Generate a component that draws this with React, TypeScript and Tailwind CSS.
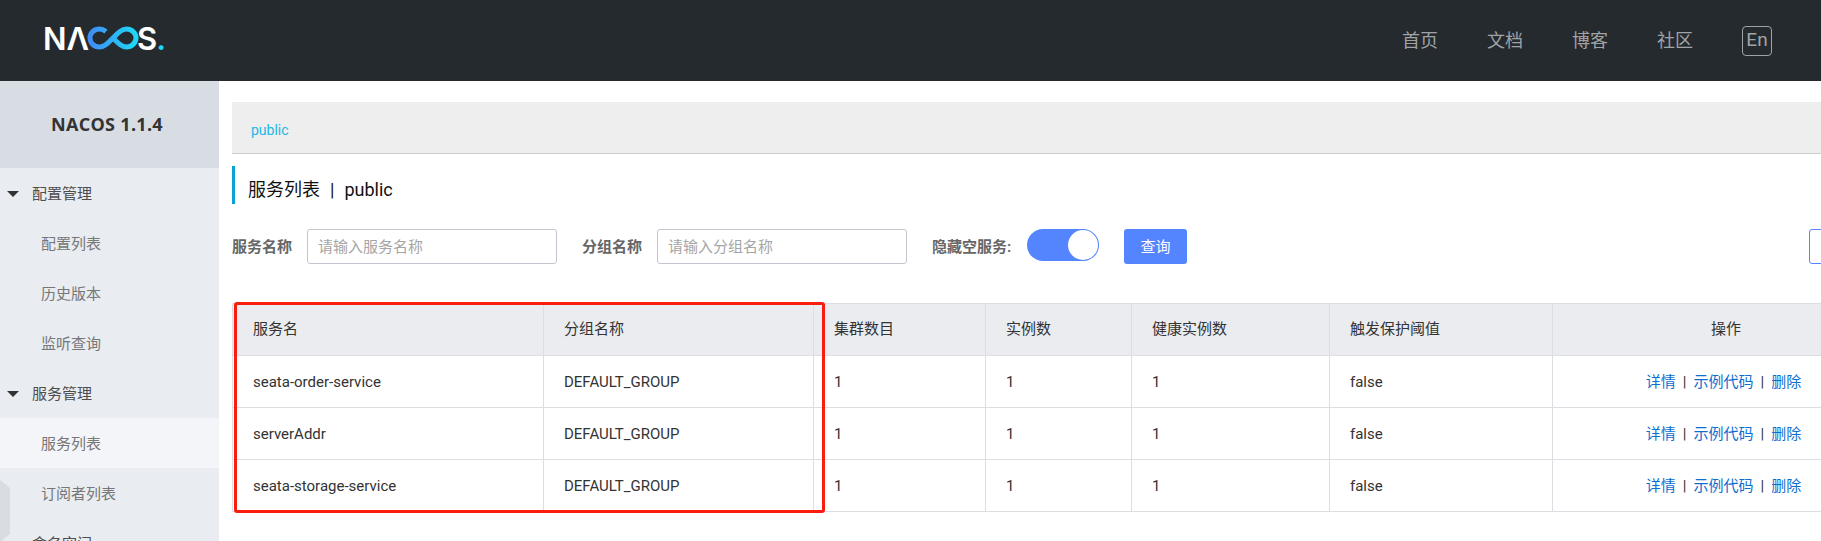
const cjk = "font-['Roboto','Noto_Sans_CJK_SC',sans-serif]";

const navLinks = ["首页", "文档", "博客", "社区"];

const columns = [
  { title: "服务名", width: "w-[311px]" },
  { title: "分组名称", width: "w-[270px]" },
  { title: "集群数目", width: "w-[172px]" },
  { title: "实例数", width: "w-[146px]" },
  { title: "健康实例数", width: "w-[198px]" },
  { title: "触发保护阈值", width: "w-[223px]" },
];

const services = ["seata-order-service", "serverAddr", "seata-storage-service"];

function Logo() {
  return (
    <div className="-mt-[5px] flex items-center text-[31px] leading-none font-semibold text-white font-['Inter',sans-serif]">
      <span>NΛ</span>
      <svg width="52" height="24" viewBox="0 0 52 24" fill="none" className="-ml-[2px]">
        <defs>
          <linearGradient id="inf" x1="0" x2="1" y1="0" y2="0">
            <stop offset="0" stopColor="#3f8df5" />
            <stop offset="1" stopColor="#1ed8f5" />
          </linearGradient>
        </defs>
        <path
          d="M19 5.500C16.800 3.800 15 3 12.500 3 7 3 3 7 3 12s4 9 9.500 9c4.500 0 7.500-3 13.500-9s9-9 13.500-9C44.500 3 49 7 49 12s-4.500 9-9.500 9c-4.500 0-7.500-3-13.500-9"
          stroke="url(#inf)"
          strokeWidth="5"
        />
      </svg>
      <span className="-ml-[2px]">S</span>
      <span className="-ml-px text-[#1ed8f5]">.</span>
    </div>
  );
}

function Header() {
  return (
    <header className="flex h-[81px] items-center justify-between bg-[#252a2f] pr-[49px] pl-[43px]">
      <Logo />
      <nav className="flex items-center text-[18px] text-[#a0a3a6]">
        {navLinks.map((link) => (
          <a key={link} className="mr-[49px]">
            {link}
          </a>
        ))}
        <span className="flex h-[30px] w-[30px] items-center justify-center rounded-sm border border-[#a0a3a6] pb-px text-[19px]">
          En
        </span>
      </nav>
    </header>
  );
}

function SideGroup({ label }: { label: string }) {
  return (
    <div className="flex h-[50px] items-center pt-[2px] text-[15px] text-[#4d4d4d]">
      <span className="mr-[13px] ml-[7px] h-0 w-0 border-x-[6px] border-t-[6px] border-x-transparent border-t-[#333]" />
      {label}
    </div>
  );
}

function SideItem({ label, active }: { label: string; active?: boolean }) {
  return (
    <div className={`flex h-[50px] items-center pt-[2px] pl-[41px] text-[15px] text-[#777] ${active ? "bg-[#f4f5f8]" : ""}`}>
      {label}
    </div>
  );
}

function Sidebar() {
  return (
    <aside className="relative w-[219px] shrink-0 bg-[#e9ecf1]">
      <div className="flex h-[87px] items-center justify-center bg-[#d8dce3] pr-[5px] font-['Open_Sans',sans-serif] text-[18px] font-bold tracking-[0.3px] text-[#333]">
        NACOS 1.1.4
      </div>
      <SideGroup label="配置管理" />
      <SideItem label="配置列表" />
      <SideItem label="历史版本" />
      <SideItem label="监听查询" />
      <SideGroup label="服务管理" />
      <SideItem label="服务列表" active />
      <SideItem label="订阅者列表" />
      <div className="flex h-[50px] items-center pt-[2px] pl-[32px] text-[15px] text-[#4d4d4d]">命名空间</div>
      {/* collapse handle, cut off by the left edge */}
      <svg width="10" height="62" viewBox="0 0 10 62" className="absolute top-[399px] left-0">
        <path d="M0 0L10 8V54L0 62Z" fill="#d8dce3" />
      </svg>
    </aside>
  );
}

function FormBar() {
  const label = "mr-[15px] shrink-0 whitespace-nowrap pt-px font-bold leading-[35px] text-[#666]";
  const input =
    "mr-[25px] h-[35px] w-[250px] shrink-0 rounded-[3px] border border-[#c4c6cf] px-[10px] pt-px text-[15px] placeholder:text-[#a5a5a5]";
  return (
    <div className="mt-[25px] flex h-[35px] items-start text-[15px]">
      <label className={label}>服务名称</label>
      <input placeholder="请输入服务名称" className={input} />
      <label className={label}>分组名称</label>
      <input placeholder="请输入分组名称" className={input} />
      <label className={`${label} w-[80px]`}>隐藏空服务:</label>
      <div className="mr-[25px] flex h-[32px] w-[72px] shrink-0 items-center justify-end rounded-full bg-[#5584ff] pr-px">
        <span className="h-[30px] w-[30px] rounded-full bg-white" />
      </div>
      <button className="h-[35px] w-[63px] shrink-0 rounded-[3px] bg-[#5584ff] pt-px text-[15px] text-white">查询</button>
      <button className="ml-[622px] h-[35px] w-[90px] shrink-0 rounded-[3px] border border-[#5584ff] bg-white" />
    </div>
  );
}

function ServiceTable() {
  const th = "h-[52px] border border-[#dcdee3] bg-[#ebecf0] px-[20px] text-[15px] font-normal text-[#333]";
  const td = "h-[52px] border border-[#dcdee3] pt-[2px] pl-[20px] text-[15px] text-[#333]";
  return (
    <table className="mt-[39px] w-[1668px] table-fixed border-collapse">
      <thead>
        <tr>
          {columns.map((col) => (
            <th key={col.title} className={`${th} ${col.width} text-left`}>
              {col.title}
            </th>
          ))}
          <th className={`${th} text-center`}>操作</th>
        </tr>
      </thead>
      <tbody>
        {services.map((name) => (
          <tr key={name}>
            <td className={td}>{name}</td>
            <td className={td}>DEFAULT_GROUP</td>
            <td className={td}>1</td>
            <td className={td}>1</td>
            <td className={td}>1</td>
            <td className={td}>false</td>
            <td className={`${td} pr-[25px] text-center`}>
              <a className="text-[#0d6ed0]">详情</a>
              <span className="mx-[7px]">|</span>
              <a className="text-[#0d6ed0]">示例代码</a>
              <span className="mx-[7px]">|</span>
              <a className="text-[#0d6ed0]">删除</a>
            </td>
          </tr>
        ))}
      </tbody>
    </table>
  );
}

export default function App() {
  return (
    <div className={`h-[541px] w-[1821px] overflow-hidden bg-white ${cjk}`}>
      <Header />
      <div className="flex h-[460px]">
        <Sidebar />
        <main className="relative min-w-0 flex-1 pt-[21px] pl-[13px]">
          <div className="flex h-[52px] items-center border-b border-[#cccccc] bg-[#eeeeee] pt-[6px] pl-[19px] text-[14px] text-[#23b7e5]">
            public
          </div>
          <h1 className="mt-[12px] flex h-[38px] items-center border-l-[3px] border-[#09a2d6] pt-[8px] pl-[13px] text-[18px] font-normal text-[#111]">
            服务列表<span className="mx-[10px]">|</span>public
          </h1>
          <FormBar />
          <ServiceTable />
          {/* red annotation drawn over the table */}
          <div className="absolute top-[221px] left-[15px] h-[211px] w-[591px] rounded-[3px] border-[3px] border-[#fb1c10]" />
        </main>
      </div>
    </div>
  );
}
